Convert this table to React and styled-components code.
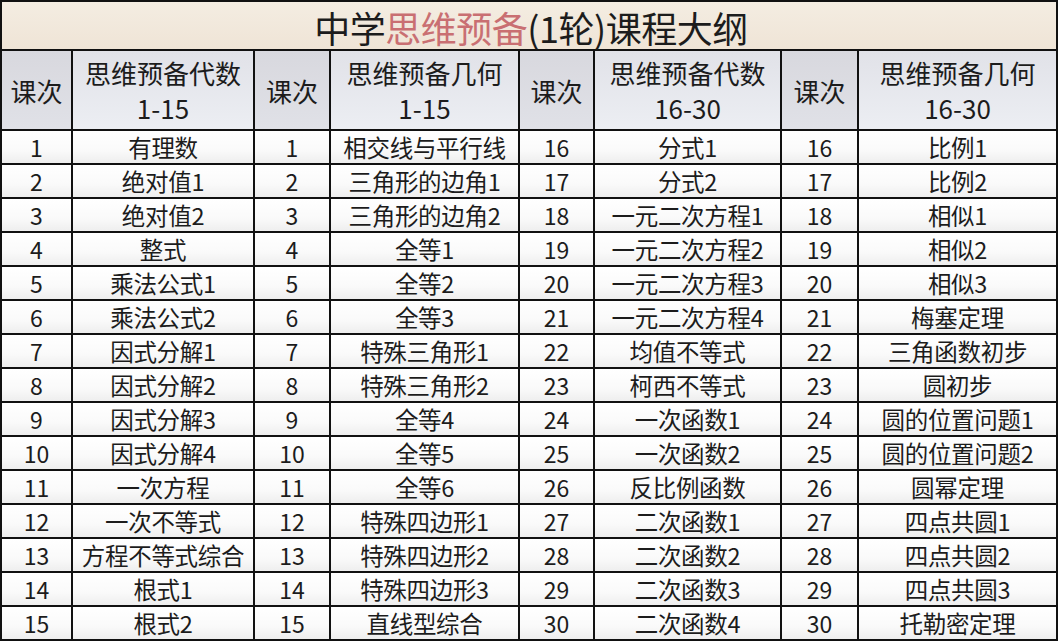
import React from "react";
import styled, { createGlobalStyle } from "styled-components";

const Global = createGlobalStyle`
  html, body { margin: 0; padding: 0; background: #ffffff; }
  body { font-family: "Noto Sans CJK SC", "Noto Sans", sans-serif; }
`;

const Sheet = styled.div`
  width: 1058px;
  display: grid;
  grid-template-columns: 69px 180px 74px 187px 73px 185px 75px 197px;
  grid-template-rows: 47px 78px repeat(15, 32px);
  gap: 2px;
  padding: 2px;
  box-sizing: border-box;
  background: #111111;
  font-family: "Noto Sans CJK SC", "Noto Sans", sans-serif;
  color: #1c1c1c;
`;

const Title = styled.div`
  grid-column: 1 / -1;
  display: flex;
  align-items: center;
  justify-content: center;
  background: linear-gradient(180deg, #f4ede2 0%, #efe4d6 100%);
  font-size: 36px;
  line-height: 1;
  padding-top: 2px;
  padding-left: 4px;
  letter-spacing: -0.5px;
`;

const Accent = styled.span`
  color: #c96f72;
`;

const HeadCell = styled.div`
  display: flex;
  flex-direction: column;
  align-items: center;
  justify-content: center;
  font-size: 26px;
  line-height: 35px;
  background: ${(p) =>
    p.$narrow
      ? "linear-gradient(180deg, #d8d8de 0%, #e0e1e7 100%)"
      : "linear-gradient(180deg, #e1e2e8 0%, #eceef3 100%)"};
`;

const Cell = styled.div`
  display: flex;
  align-items: center;
  justify-content: center;
  font-size: ${(p) => (p.$num ? "23px" : "23.5px")};
  line-height: 1;
  white-space: nowrap;
  letter-spacing: ${(p) => (p.$num ? "0" : "-0.3px")};
  background: linear-gradient(180deg, #ffffff 0%, #fafafa 60%, #eeeeee 100%);
  padding-top: 1px;
`;

const alg1 = ["有理数", "绝对值1", "绝对值2", "整式", "乘法公式1", "乘法公式2", "因式分解1", "因式分解2", "因式分解3", "因式分解4", "一次方程", "一次不等式", "方程不等式综合", "根式1", "根式2"];
const geo1 = ["相交线与平行线", "三角形的边角1", "三角形的边角2", "全等1", "全等2", "全等3", "特殊三角形1", "特殊三角形2", "全等4", "全等5", "全等6", "特殊四边形1", "特殊四边形2", "特殊四边形3", "直线型综合"];
const alg2 = ["分式1", "分式2", "一元二次方程1", "一元二次方程2", "一元二次方程3", "一元二次方程4", "均值不等式", "柯西不等式", "一次函数1", "一次函数2", "反比例函数", "二次函数1", "二次函数2", "二次函数3", "二次函数4"];
const geo2 = ["比例1", "比例2", "相似1", "相似2", "相似3", "梅塞定理", "三角函数初步", "圆初步", "圆的位置问题1", "圆的位置问题2", "圆幂定理", "四点共圆1", "四点共圆2", "四点共圆3", "托勒密定理"];

const heads = [
  ["思维预备代数", "1-15"],
  ["思维预备几何", "1-15"],
  ["思维预备代数", "16-30"],
  ["思维预备几何", "16-30"],
];

export default function App() {
  const rows = alg1.map((_, i) => [
    i + 1, alg1[i], i + 1, geo1[i], i + 16, alg2[i], i + 16, geo2[i],
  ]);
  return (
    <>
      <Global />
      <Sheet>
        <Title>
          中学<Accent>思维预备</Accent>(1轮)课程大纲
        </Title>
        {heads.map((h, k) => (
          <React.Fragment key={k}>
            <HeadCell $narrow>课次</HeadCell>
            <HeadCell>
              <span>{h[0]}</span>
              <span>{h[1]}</span>
            </HeadCell>
          </React.Fragment>
        ))}
        {rows.map((r, i) =>
          r.map((v, j) => (
            <Cell key={`${i}-${j}`} $num={j % 2 === 0}>
              {v}
            </Cell>
          ))
        )}
      </Sheet>
    </>
  );
}
